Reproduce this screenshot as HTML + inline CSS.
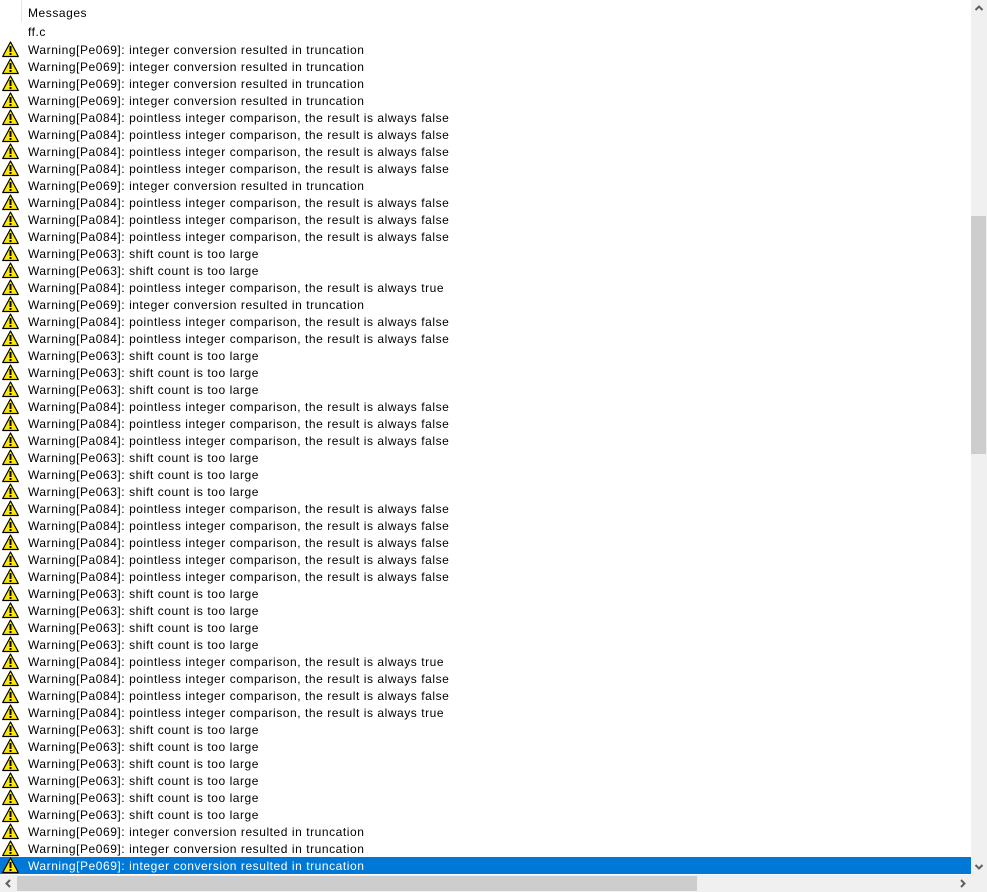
<!DOCTYPE html>
<html><head><meta charset="utf-8"><style>
html,body{margin:0;padding:0;width:987px;height:892px;overflow:hidden;background:#fff;font-family:"Liberation Sans",Arial,sans-serif;font-size:12px;color:#000;letter-spacing:0.55px}
.sep{position:absolute;left:21px;top:0;width:1px;height:22px;background:#e5e5e5}
.hdr{position:absolute;left:28px;top:5px;line-height:17px}
.file{position:absolute;left:28px;top:24px;line-height:17px}
#list{position:absolute;left:0;top:41px;width:971px}
.r{position:relative;height:17px;line-height:17px;white-space:nowrap}
.r svg{position:absolute;left:2px;top:0}
.r span{position:absolute;left:28px;top:1px}
.sel{background:#0078d7;color:#fff}
.vs{position:absolute;left:971px;top:0;width:16px;height:875px;background:#f0f0f0}
.vt{position:absolute;left:971px;top:216px;width:15px;height:238px;background:#cdcdcd}
.hs{position:absolute;left:0;top:875px;width:971px;height:17px;background:#f0f0f0}
.ht{position:absolute;left:17px;top:876px;width:680px;height:15px;background:#cdcdcd}
.corner{position:absolute;left:971px;top:875px;width:16px;height:17px;background:#f0f0f0}
</style></head><body>
<svg width="0" height="0" style="position:absolute"><defs><symbol id="w" viewBox="0 0 17 17"><path d="M8.5 1 L16.3 15.5 L0.7 15.5 Z" fill="#ffe800" stroke="#000" stroke-width="1.2" stroke-linejoin="round"/><rect x="7.5" y="5" width="2" height="6" fill="#000"/><rect x="7.5" y="12" width="2" height="2" fill="#000"/></symbol></defs></svg>
<div class="sep"></div>
<div class="hdr">Messages</div>
<div class="file">ff.c</div>
<div id="list">
<div class="r"><svg width="17" height="17"><use href="#w"/></svg><span>Warning[Pe069]: integer conversion resulted in truncation</span></div>
<div class="r"><svg width="17" height="17"><use href="#w"/></svg><span>Warning[Pe069]: integer conversion resulted in truncation</span></div>
<div class="r"><svg width="17" height="17"><use href="#w"/></svg><span>Warning[Pe069]: integer conversion resulted in truncation</span></div>
<div class="r"><svg width="17" height="17"><use href="#w"/></svg><span>Warning[Pe069]: integer conversion resulted in truncation</span></div>
<div class="r"><svg width="17" height="17"><use href="#w"/></svg><span>Warning[Pa084]: pointless integer comparison, the result is always false</span></div>
<div class="r"><svg width="17" height="17"><use href="#w"/></svg><span>Warning[Pa084]: pointless integer comparison, the result is always false</span></div>
<div class="r"><svg width="17" height="17"><use href="#w"/></svg><span>Warning[Pa084]: pointless integer comparison, the result is always false</span></div>
<div class="r"><svg width="17" height="17"><use href="#w"/></svg><span>Warning[Pa084]: pointless integer comparison, the result is always false</span></div>
<div class="r"><svg width="17" height="17"><use href="#w"/></svg><span>Warning[Pe069]: integer conversion resulted in truncation</span></div>
<div class="r"><svg width="17" height="17"><use href="#w"/></svg><span>Warning[Pa084]: pointless integer comparison, the result is always false</span></div>
<div class="r"><svg width="17" height="17"><use href="#w"/></svg><span>Warning[Pa084]: pointless integer comparison, the result is always false</span></div>
<div class="r"><svg width="17" height="17"><use href="#w"/></svg><span>Warning[Pa084]: pointless integer comparison, the result is always false</span></div>
<div class="r"><svg width="17" height="17"><use href="#w"/></svg><span>Warning[Pe063]: shift count is too large</span></div>
<div class="r"><svg width="17" height="17"><use href="#w"/></svg><span>Warning[Pe063]: shift count is too large</span></div>
<div class="r"><svg width="17" height="17"><use href="#w"/></svg><span>Warning[Pa084]: pointless integer comparison, the result is always true</span></div>
<div class="r"><svg width="17" height="17"><use href="#w"/></svg><span>Warning[Pe069]: integer conversion resulted in truncation</span></div>
<div class="r"><svg width="17" height="17"><use href="#w"/></svg><span>Warning[Pa084]: pointless integer comparison, the result is always false</span></div>
<div class="r"><svg width="17" height="17"><use href="#w"/></svg><span>Warning[Pa084]: pointless integer comparison, the result is always false</span></div>
<div class="r"><svg width="17" height="17"><use href="#w"/></svg><span>Warning[Pe063]: shift count is too large</span></div>
<div class="r"><svg width="17" height="17"><use href="#w"/></svg><span>Warning[Pe063]: shift count is too large</span></div>
<div class="r"><svg width="17" height="17"><use href="#w"/></svg><span>Warning[Pe063]: shift count is too large</span></div>
<div class="r"><svg width="17" height="17"><use href="#w"/></svg><span>Warning[Pa084]: pointless integer comparison, the result is always false</span></div>
<div class="r"><svg width="17" height="17"><use href="#w"/></svg><span>Warning[Pa084]: pointless integer comparison, the result is always false</span></div>
<div class="r"><svg width="17" height="17"><use href="#w"/></svg><span>Warning[Pa084]: pointless integer comparison, the result is always false</span></div>
<div class="r"><svg width="17" height="17"><use href="#w"/></svg><span>Warning[Pe063]: shift count is too large</span></div>
<div class="r"><svg width="17" height="17"><use href="#w"/></svg><span>Warning[Pe063]: shift count is too large</span></div>
<div class="r"><svg width="17" height="17"><use href="#w"/></svg><span>Warning[Pe063]: shift count is too large</span></div>
<div class="r"><svg width="17" height="17"><use href="#w"/></svg><span>Warning[Pa084]: pointless integer comparison, the result is always false</span></div>
<div class="r"><svg width="17" height="17"><use href="#w"/></svg><span>Warning[Pa084]: pointless integer comparison, the result is always false</span></div>
<div class="r"><svg width="17" height="17"><use href="#w"/></svg><span>Warning[Pa084]: pointless integer comparison, the result is always false</span></div>
<div class="r"><svg width="17" height="17"><use href="#w"/></svg><span>Warning[Pa084]: pointless integer comparison, the result is always false</span></div>
<div class="r"><svg width="17" height="17"><use href="#w"/></svg><span>Warning[Pa084]: pointless integer comparison, the result is always false</span></div>
<div class="r"><svg width="17" height="17"><use href="#w"/></svg><span>Warning[Pe063]: shift count is too large</span></div>
<div class="r"><svg width="17" height="17"><use href="#w"/></svg><span>Warning[Pe063]: shift count is too large</span></div>
<div class="r"><svg width="17" height="17"><use href="#w"/></svg><span>Warning[Pe063]: shift count is too large</span></div>
<div class="r"><svg width="17" height="17"><use href="#w"/></svg><span>Warning[Pe063]: shift count is too large</span></div>
<div class="r"><svg width="17" height="17"><use href="#w"/></svg><span>Warning[Pa084]: pointless integer comparison, the result is always true</span></div>
<div class="r"><svg width="17" height="17"><use href="#w"/></svg><span>Warning[Pa084]: pointless integer comparison, the result is always false</span></div>
<div class="r"><svg width="17" height="17"><use href="#w"/></svg><span>Warning[Pa084]: pointless integer comparison, the result is always false</span></div>
<div class="r"><svg width="17" height="17"><use href="#w"/></svg><span>Warning[Pa084]: pointless integer comparison, the result is always true</span></div>
<div class="r"><svg width="17" height="17"><use href="#w"/></svg><span>Warning[Pe063]: shift count is too large</span></div>
<div class="r"><svg width="17" height="17"><use href="#w"/></svg><span>Warning[Pe063]: shift count is too large</span></div>
<div class="r"><svg width="17" height="17"><use href="#w"/></svg><span>Warning[Pe063]: shift count is too large</span></div>
<div class="r"><svg width="17" height="17"><use href="#w"/></svg><span>Warning[Pe063]: shift count is too large</span></div>
<div class="r"><svg width="17" height="17"><use href="#w"/></svg><span>Warning[Pe063]: shift count is too large</span></div>
<div class="r"><svg width="17" height="17"><use href="#w"/></svg><span>Warning[Pe063]: shift count is too large</span></div>
<div class="r"><svg width="17" height="17"><use href="#w"/></svg><span>Warning[Pe069]: integer conversion resulted in truncation</span></div>
<div class="r"><svg width="17" height="17"><use href="#w"/></svg><span>Warning[Pe069]: integer conversion resulted in truncation</span></div>
<div class="r sel"><svg width="17" height="17"><use href="#w"/></svg><span>Warning[Pe069]: integer conversion resulted in truncation</span></div>
</div>
<div class="vs"></div>
<div class="vt"></div>
<svg style="position:absolute;left:971px;top:0" width="16" height="17"><path d="M4.5 10 L8 6.5 L11.5 10" fill="none" stroke="#606060" stroke-width="2"/></svg>
<svg style="position:absolute;left:971px;top:858px" width="16" height="17"><path d="M4.5 7 L8 10.5 L11.5 7" fill="none" stroke="#606060" stroke-width="2"/></svg>
<div class="hs"></div>
<div class="ht"></div>
<svg style="position:absolute;left:0;top:875px" width="17" height="17"><path d="M10 5 L6.5 8.5 L10 12" fill="none" stroke="#606060" stroke-width="2"/></svg>
<svg style="position:absolute;left:954px;top:875px" width="17" height="17"><path d="M7 5 L10.5 8.5 L7 12" fill="none" stroke="#606060" stroke-width="2"/></svg>
<div class="corner"></div>
</body></html>
